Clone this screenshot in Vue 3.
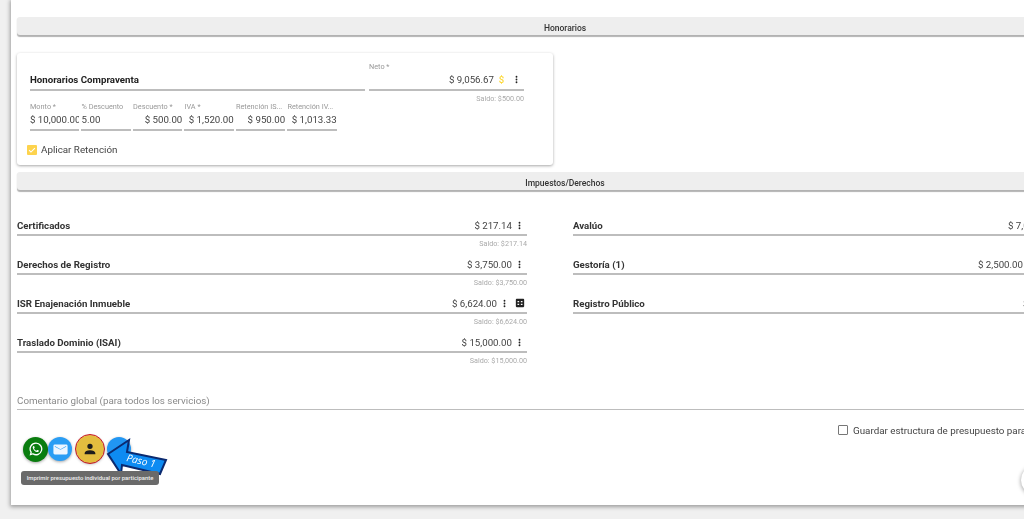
<template>
  <div class="page">
    <div class="panel">
      <div class="bar">Honorarios</div>

      <div class="card">
        <div class="card-top">
          <div class="field title-field">Honorarios Compraventa</div>
          <div class="net">
            <div class="mini-label">Neto *</div>
            <div class="field amount-field">
              <span class="value">$ 9,056.67</span>
              <span class="slot coin">$</span>
              <span class="slot">
                <svg class="icon" viewBox="0 0 24 24"><path d="M12 8a2 2 0 1 0 0-4 2 2 0 0 0 0 4zm0 2a2 2 0 1 0 0 4 2 2 0 0 0 0-4zm0 6a2 2 0 1 0 0 4 2 2 0 0 0 0-4z" /></svg>
              </span>
            </div>
          </div>
        </div>
        <div class="saldo net-saldo">Saldo: $500.00</div>

        <div class="inputs">
          <div v-for="item in inputs" :key="item.label" class="input">
            <div class="mini-label">{{ item.label }}</div>
            <div class="input-value" :class="{ left: item.left }">{{ item.value }}</div>
          </div>
        </div>

        <div class="apply">
          <span class="check-on">
            <svg viewBox="0 0 24 24"><path d="M5 12.5l4.5 4.5L19 7.5" fill="none" stroke="#fff" stroke-width="2.5" /></svg>
          </span>
          Aplicar Retención
        </div>
      </div>

      <div class="bar">Impuestos/Derechos</div>

      <div class="taxes">
        <div v-for="row in taxes" :key="row.label" class="tax">
          <div class="field amount-field">
            <span class="tax-label">{{ row.label }}</span>
            <span class="value">{{ row.value }}</span>
            <span v-for="n in row.dots" :key="n" class="slot">
              <svg class="icon" viewBox="0 0 24 24"><path d="M12 8a2 2 0 1 0 0-4 2 2 0 0 0 0 4zm0 2a2 2 0 1 0 0 4 2 2 0 0 0 0-4zm0 6a2 2 0 1 0 0 4 2 2 0 0 0 0-4z" /></svg>
            </span>
            <span v-if="row.table" class="slot">
              <svg class="icon table" viewBox="0 0 24 24"><path fill-rule="evenodd" d="M4 2h16a2 2 0 0 1 2 2v16a2 2 0 0 1-2 2H4a2 2 0 0 1-2-2V4a2 2 0 0 1 2-2zm2 5v3h4V7H6zm8 0v3h4V7h-4zm-8 7v3h4v-3H6zm8 0v3h4v-3h-4z" /></svg>
            </span>
          </div>
          <div v-if="row.saldo" class="saldo">{{ row.saldo }}</div>
        </div>
      </div>

      <div class="comment">Comentario global (para todos los servicios)</div>

      <div class="save">
        <span class="check-off"></span>
        Guardar estructura de presupuesto para todos los servicios
      </div>

      <div class="actions">
        <button class="round whatsapp">
          <svg viewBox="0 0 24 24"><path d="M12 2.2A9.7 9.7 0 0 0 3.7 17L2.4 21.7l4.8-1.3A9.7 9.7 0 1 0 12 2.2zm0 2a7.7 7.7 0 1 1-4.2 14.2l-.4-.2-2.2.6.6-2.2-.3-.4A7.7 7.7 0 0 1 12 4.2zM8.8 7.6c-.3 0-.6.1-.9.4-.6.6-.9 1.3-.8 2.2.2 1.2 1 2.6 2.2 3.9 1.5 1.5 3 2.3 4.4 2.5.9.1 1.7-.2 2.2-.9.3-.4.4-.9.3-1.3l-2.1-1c-.2-.1-.4 0-.5.1l-.7.9c-.1.1-.3.2-.5.1-1.5-.6-2.6-1.7-3.2-3-.1-.2 0-.3.1-.5l.5-.6c.1-.2.2-.4.1-.6L9.3 8c-.1-.3-.3-.4-.5-.4z" /></svg>
        </button>
        <button class="round mail">
          <svg viewBox="0 0 24 24"><path d="M4 5h16a2 2 0 0 1 2 2v10a2 2 0 0 1-2 2H4a2 2 0 0 1-2-2V7a2 2 0 0 1 2-2zm8 7.5L20 8V7l-8 4.5L4 7v1z" /></svg>
        </button>
        <button class="round person">
          <svg viewBox="0 0 24 24"><path d="M12 4a4 4 0 1 1 0 8 4 4 0 0 1 0-8zm0 10c4.4 0 8 1.8 8 4v2H4v-2c0-2.2 3.6-4 8-4z" /></svg>
        </button>
        <button class="round blue"></button>

        <svg class="arrow" viewBox="0 0 64 40">
          <polygon points="3,17 24,3 22,15 61,23 55,37 17,28 16,37" fill="#0d8bf2" stroke="#0b2a70" stroke-width="2" stroke-linejoin="miter" />
          <text x="21" y="24" transform="rotate(13 21 24)" class="arrow-text">Paso 1</text>
        </svg>

        <div class="tooltip">Imprimir presupuesto individual por participante</div>
      </div>

      <span class="fab"></span>
    </div>
  </div>
</template>

<script setup>
const inputs = [
  { label: 'Monto *', value: '$ 10,000.00', left: true },
  { label: '% Descuento', value: '5.00', left: true },
  { label: 'Descuento *', value: '$ 500.00' },
  { label: 'IVA *', value: '$ 1,520.00' },
  { label: 'Retención IS...', value: '$ 950.00' },
  { label: 'Retención IV...', value: '$ 1,013.33' }
]

const taxes = [
  { label: 'Certificados', value: '$ 217.14', dots: 1, saldo: 'Saldo: $217.14' },
  { label: 'Avalúo', value: '$ 7,000.00', dots: 2 },
  { label: 'Derechos de Registro', value: '$ 3,750.00', dots: 1, saldo: 'Saldo: $3,750.00' },
  { label: 'Gestoría (1)', value: '$ 2,500.00', dots: 4 },
  { label: 'ISR Enajenación Inmueble', value: '$ 6,624.00', dots: 1, table: true, saldo: 'Saldo: $6,624.00' },
  { label: 'Registro Público', value: '$ 1,000.00', dots: 1 },
  { label: 'Traslado Dominio (ISAI)', value: '$ 15,000.00', dots: 1, saldo: 'Saldo: $15,000.00' }
]
</script>

<style>
html,
body {
  margin: 0;
  background: #f0f0f0;
}
</style>

<style scoped>
.page {
  width: 1024px;
  height: 519px;
  overflow: hidden;
  padding-left: 11px;
  box-sizing: border-box;
  font-family: Roboto, "Liberation Sans", sans-serif;
  color: #444;
  filter: blur(0.4px);
}

.panel {
  position: relative;
  width: 1108px;
  height: 505px;
  padding: 17px 6px 0;
  box-sizing: border-box;
  background: #fff;
  box-shadow: 0 1px 4px 1px rgba(0, 0, 0, 0.35);
}

.bar {
  height: 18px;
  line-height: 22px;
  text-align: center;
  font-size: 8.5px;
  font-weight: 500;
  color: #333;
  background: #eee;
  border-radius: 3px;
  box-shadow: 0 1.5px 1px rgba(0, 0, 0, 0.3);
}

.card {
  width: 536px;
  height: 112px;
  margin: 18px 0 7px;
  padding: 8px 29px 0 13px;
  box-sizing: border-box;
  background: #fff;
  border-radius: 3px;
  box-shadow: 0 1px 3px rgba(0, 0, 0, 0.35);
}

.card-top {
  display: flex;
  align-items: flex-end;
  gap: 4px;
}

.field {
  height: 20px;
  display: flex;
  align-items: center;
  box-sizing: border-box;
  border-bottom: 2px solid #bdbdbd;
}

.title-field {
  width: 335px;
  padding-bottom: 2px;
  font-size: 9.7px;
  font-weight: 700;
  color: #222;
}

.net {
  flex: 1;
}

.net .mini-label {
  height: 10px;
  line-height: 11px;
}

.net .field {
  padding-bottom: 2px;
}

.amount-field {
  justify-content: flex-end;
}

.value {
  font-size: 9.7px;
  white-space: nowrap;
}

.slot {
  width: 15px;
  flex: none;
  display: flex;
  justify-content: center;
  align-items: center;
}

.coin {
  font-size: 9.5px;
  font-weight: 500;
  color: #fdd835;
}

.icon {
  width: 11px;
  height: 11px;
  fill: #222;
}

.icon.table {
  width: 10px;
  height: 10px;
}

.mini-label {
  font-size: 7.3px;
  line-height: 9px;
  color: #999;
  white-space: nowrap;
  overflow: hidden;
}

.saldo {
  height: 12px;
  line-height: 15px;
  text-align: right;
  font-size: 7.2px;
  color: #aaa;
}

.net-saldo {
  height: 11px;
  line-height: 15px;
}

.inputs {
  display: flex;
  gap: 2.2px;
  width: 307px;
}

.input {
  width: 49.3px;
  flex: none;
  overflow: hidden;
}

.input-value {
  height: 18px;
  line-height: 18px;
  font-size: 9.7px;
  text-align: right;
  white-space: nowrap;
  overflow: hidden;
  border-bottom: 2px solid #bdbdbd;
}

.input-value.left {
  text-align: left;
}

.apply {
  display: flex;
  align-items: center;
  gap: 4px;
  margin: 13px 0 0 -3px;
  font-size: 9.8px;
}

.check-on {
  width: 10px;
  height: 10px;
  background: #fdd34d;
  border-radius: 1px;
  display: flex;
}

.taxes {
  display: grid;
  grid-template-columns: 510px 510px;
  column-gap: 46px;
  grid-auto-rows: 39px;
  margin-top: 26px;
}

.tax-label {
  margin-right: auto;
  font-size: 9.7px;
  font-weight: 700;
  color: #333;
}

.comment {
  margin-top: 22px;
  padding-bottom: 1px;
  font-size: 9.8px;
  line-height: 14px;
  color: #8a8a8a;
  border-bottom: 1.5px solid #bdbdbd;
}

.save {
  display: flex;
  align-items: center;
  gap: 5px;
  height: 10px;
  margin-top: 15px;
  padding-left: 821px;
  font-size: 9.8px;
  white-space: nowrap;
}

.check-off {
  width: 8px;
  height: 8px;
  border: 1px solid #777;
  border-radius: 1px;
  flex: none;
}

.actions {
  position: relative;
  display: flex;
  align-items: center;
  height: 32px;
  margin-top: -2px;
  padding-left: 6px;
}

.round {
  flex: none;
  padding: 0;
  border: 0;
  border-radius: 50%;
  display: flex;
  align-items: center;
  justify-content: center;
  box-shadow: 0 1px 3px rgba(0, 0, 0, 0.35);
}

.whatsapp {
  width: 25px;
  height: 25px;
  background: #0a7d0f;
}

.whatsapp svg {
  width: 16px;
  height: 16px;
  fill: #fff;
}

.mail {
  width: 24px;
  height: 24px;
  background: #2a9df4;
}

.mail svg {
  width: 17px;
  height: 17px;
  fill: #eef6ff;
}

.person {
  width: 28px;
  height: 28px;
  margin-left: 4px;
  background: #e3bd3f;
  outline: 1.5px solid #c8141e;
  outline-offset: 0.5px;
}

.person svg {
  width: 16px;
  height: 16px;
  fill: #1c1c1c;
}

.blue {
  width: 24px;
  height: 24px;
  margin-left: 3px;
  background: #2196f3;
}

.arrow {
  position: absolute;
  left: 88px;
  top: 4px;
  width: 64px;
  height: 40px;
  overflow: visible;
}

.arrow-text {
  font-family: "Open Sans", sans-serif;
  font-style: italic;
  font-size: 10px;
  fill: #fff;
}

.tooltip {
  position: absolute;
  left: 4px;
  top: 38px;
  width: 138px;
  height: 14px;
  line-height: 14px;
  text-align: center;
  font-size: 5.9px;
  font-weight: 500;
  color: #eee;
  background: #6a6a6a;
  border-radius: 3px;
  white-space: nowrap;
}

.fab {
  position: absolute;
  left: 1010px;
  top: 465px;
  width: 30px;
  height: 30px;
  border-radius: 50%;
  box-shadow: 0 1px 4px rgba(0, 0, 0, 0.4);
}
</style>
